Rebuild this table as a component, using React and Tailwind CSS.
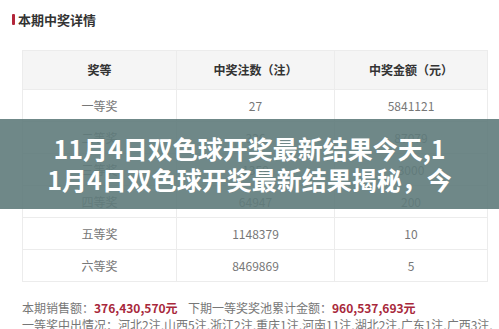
import React from "react";

const rows = [
  { level: "一等奖", count: "27", amount: "5841121" },
  { level: "二等奖", count: "326", amount: "87079" },
  { level: "三等奖", count: "1359", amount: "3000" },
  { level: "四等奖", count: "64947", amount: "200" },
  { level: "五等奖", count: "1148379", amount: "10" },
  { level: "六等奖", count: "8469869", amount: "5" },
];

export default function App() {
  return (
    <div className="relative w-[499px] h-[329px] overflow-hidden bg-white font-['Noto_Sans_CJK_SC','Noto_Sans',sans-serif]">
      {/* Section title */}
      <div className="flex items-center h-[15px] mt-[12px] pl-[12px]">
        <span className="w-[3px] h-[11px] rounded-[1px] bg-[#b3263a]" />
        <span className="ml-[3px] text-[13px] font-bold text-[#333] leading-none">本期中奖详情</span>
      </div>

      {/* Prize table */}
      <div className="ml-[22px] mt-[23px] w-[466px] border border-[#ececec]">
        <div className="grid grid-cols-[154px_158px_1fr] h-[38px] bg-[#f5f5f5] text-[12px] font-semibold text-[#333]">
          <div className="flex items-center justify-center border-r border-[#ececec]">奖等</div>
          <div className="flex items-center justify-center border-r border-[#ececec]">中奖注数（注）</div>
          <div className="flex items-center justify-center">中奖金额（元）</div>
        </div>
        {rows.map((r) => (
          <div
            key={r.level}
            className="grid grid-cols-[154px_158px_1fr] h-[32px] border-t border-[#ececec] text-[12px] text-[#777]"
          >
            <div className="flex items-center justify-center border-r border-[#ececec]">{r.level}</div>
            <div className="flex items-center justify-center border-r border-[#ececec]">{r.count}</div>
            <div className="flex items-center justify-center">{r.amount}</div>
          </div>
        ))}
      </div>

      {/* Sales summary */}
      <div className="ml-[22px] mt-[17px] text-[12px] leading-[17px] text-[#777] whitespace-nowrap">
        <div className="flex">
          <div className="w-[166px]">
            本期销售额：<span className="font-semibold text-[#a8283b]">376,430,570元</span>
          </div>
          <div>
            下期一等奖奖池累计金额：<span className="font-semibold text-[#a8283b]">960,537,693元</span>
          </div>
        </div>
        <div>一等奖中出情况：河北2注,山西5注,浙江2注,重庆1注,河南11注,湖北2注,广东1注,广西3注,</div>
      </div>

      {/* Headline banner over the table */}
      <div className="absolute left-0 top-[119px] w-full h-[90px] bg-[#5f7b7b]/90 flex flex-col items-center justify-center text-white font-bold text-[25px] leading-[31px] whitespace-nowrap">
        <span>11月4日双色球开奖最新结果今天,1</span>
        <span>1月4日双色球开奖最新结果揭秘，今</span>
      </div>
    </div>
  );
}
